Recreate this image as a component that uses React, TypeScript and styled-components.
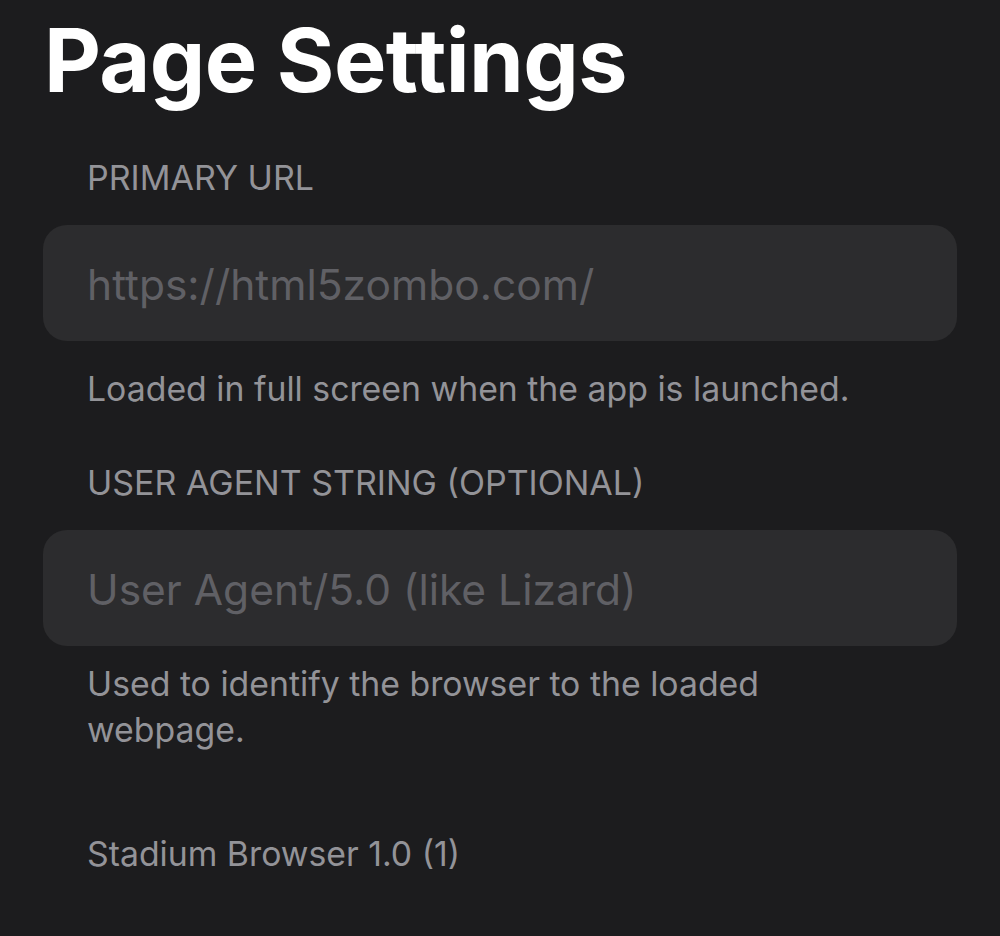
import React from "react";
import styled, { createGlobalStyle } from "styled-components";

const GlobalStyle = createGlobalStyle`
  html, body {
    margin: 0;
    padding: 0;
    background: #1c1c1e;
  }
  * {
    box-sizing: border-box;
  }
`;

const Page = styled.div`
  min-height: 100vh;
  padding: 16px 43px 40px;
  background: #1c1c1e;
  font-family: Inter, "Noto Sans", "Liberation Sans", sans-serif;
  display: flex;
  flex-direction: column;
`;

const Title = styled.h1`
  margin: 0 0 0 1px;
  font-size: 88px;
  line-height: 88px;
  font-weight: 700;
  letter-spacing: -0.6px;
  color: #ffffff;
`;

const Section = styled.section<{ $top: number }>`
  display: flex;
  flex-direction: column;
  margin-top: ${(p) => p.$top}px;
`;

const SectionHeader = styled.div`
  padding-left: 44px;
  font-size: 34px;
  line-height: 44px;
  color: #939398;
  text-transform: uppercase;
  margin-bottom: 25px;
`;

const Field = styled.input`
  display: block;
  width: 100%;
  height: 116px;
  padding: 2px 44px 0;
  border: none;
  outline: none;
  border-radius: 24px;
  background: #2c2c2e;
  font-family: inherit;
  font-size: 42.5px;
  color: #ffffff;

  &::placeholder {
    color: #606065;
  }
`;

const SectionFooter = styled.div<{ $top: number }>`
  margin-top: ${(p) => p.$top}px;
  padding-left: 44px;
  padding-right: 44px;
  font-size: 33.8px;
  line-height: 46px;
  color: #939398;
`;

const Version = styled.div`
  margin-top: 79px;
  padding-left: 44px;
  font-size: 33.8px;
  line-height: 44px;
  color: #939398;
`;

const sections = [
  {
    header: "Primary URL",
    placeholder: "https://html5zombo.com/",
    footer: "Loaded in full screen when the app is launched.",
    top: 52,
    footerTop: 25,
  },
  {
    header: "User Agent String (Optional)",
    placeholder: "User Agent/5.0 (like Lizard)",
    footer: "Used to identify the browser to the loaded webpage.",
    top: 49,
    footerTop: 15,
  },
];

const App = () => {
  return (
    <>
      <GlobalStyle />
      <Page>
        <Title>Page Settings</Title>
        {sections.map((s) => (
          <Section key={s.header} $top={s.top}>
            <SectionHeader>{s.header}</SectionHeader>
            <Field type="text" placeholder={s.placeholder} />
            <SectionFooter $top={s.footerTop}>{s.footer}</SectionFooter>
          </Section>
        ))}
        <Version>Stadium Browser 1.0 (1)</Version>
      </Page>
    </>
  );
};

export default App;
